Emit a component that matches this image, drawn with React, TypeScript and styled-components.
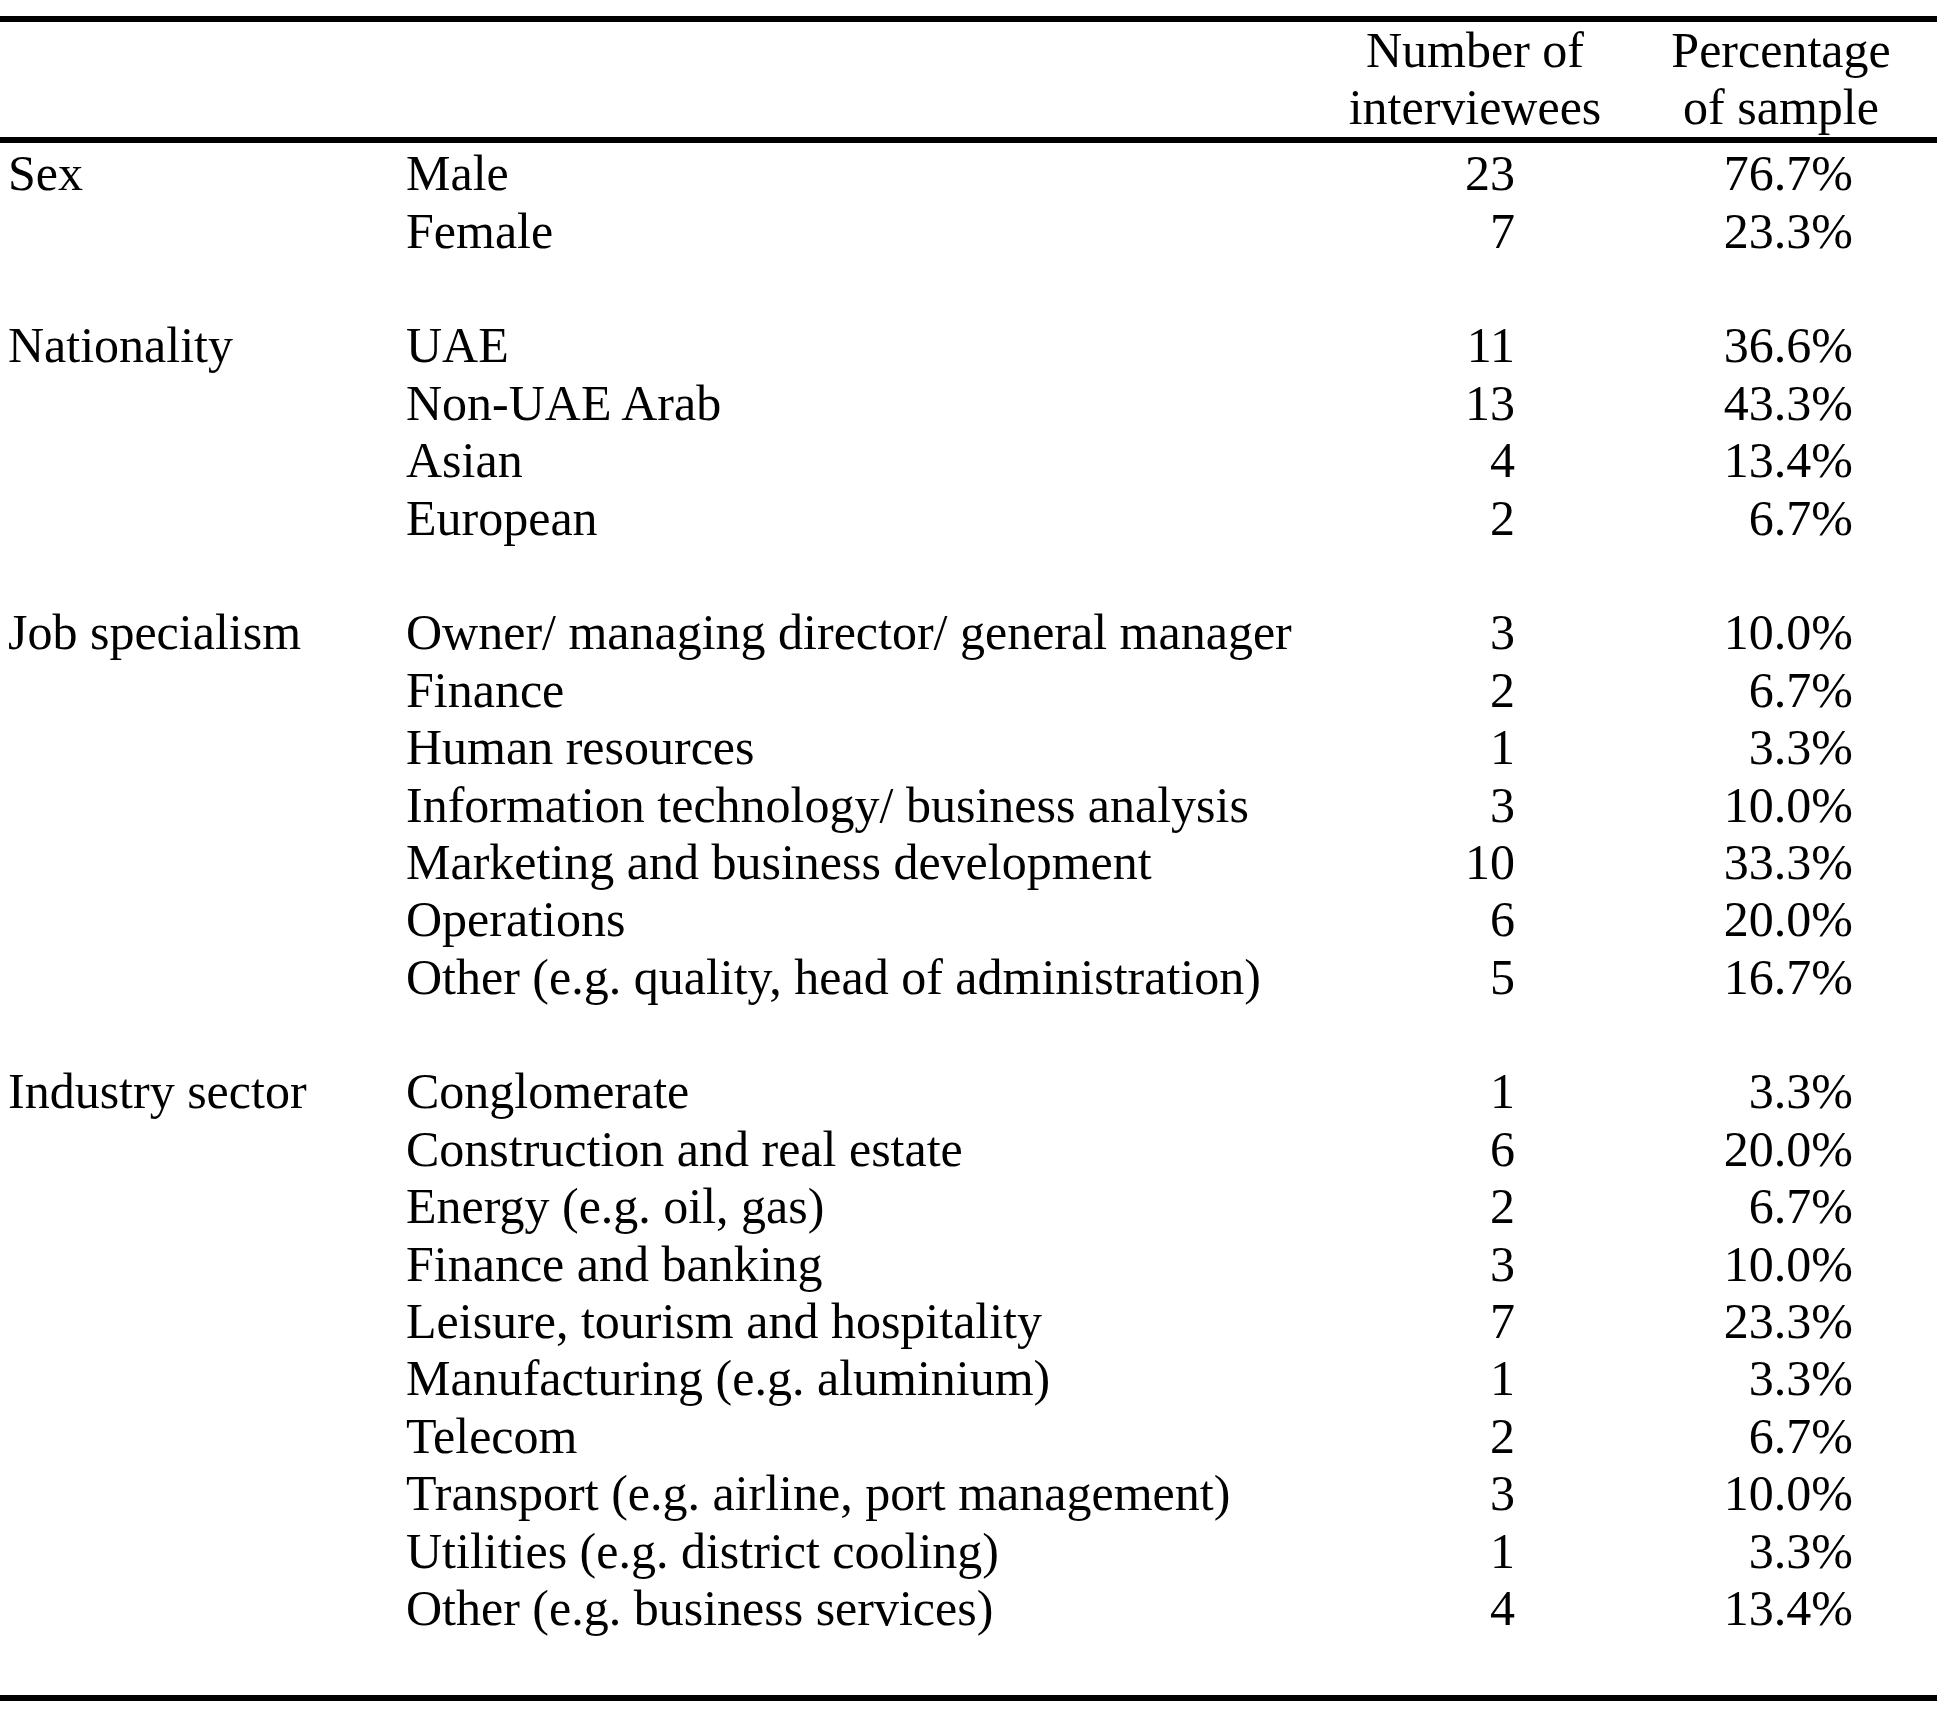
import React from 'react';
import styled, { createGlobalStyle } from 'styled-components';

const GlobalStyle = createGlobalStyle`
  html, body {
    margin: 0;
    padding: 0;
    background: #ffffff;
  }
  body {
    font-family: "Liberation Serif", "Times New Roman", serif;
    color: #000000;
  }
`;

const Page = styled.div`
  padding-top: 16px;
  width: 1937px;
`;

const Table = styled.div`
  border-top: 6px solid #000;
  border-bottom: 6px solid #000;
  font-size: 50px;
  line-height: 57.4px;
`;

const Head = styled.div`
  display: grid;
  grid-template-columns: 406px 919px 300px 1fr;
  border-bottom: 6px solid #000;
`;

const HeadCell = styled.div`
  text-align: center;
  white-space: nowrap;
`;

const Body = styled.div`
  padding: 2.4px 0 58px;
`;

const Group = styled.div<{ $last?: boolean }>`
  margin-bottom: ${(p) => (p.$last ? '0' : '57.4px')};
`;

const Row = styled.div`
  display: grid;
  grid-template-columns: 406px 919px 300px 1fr;
  height: 57.4px;
`;

const Label = styled.div`
  padding-left: 8px;
  white-space: nowrap;
`;

const Item = styled.div`
  white-space: nowrap;
`;

const Num = styled.div<{ $pad: number }>`
  text-align: right;
  padding-right: ${(p) => p.$pad}px;
  white-space: nowrap;
`;

type Entry = [string, number, string];

const groups: { label: string; rows: Entry[] }[] = [
  {
    label: 'Sex',
    rows: [
      ['Male', 23, '76.7%'],
      ['Female', 7, '23.3%'],
    ],
  },
  {
    label: 'Nationality',
    rows: [
      ['UAE', 11, '36.6%'],
      ['Non-UAE Arab', 13, '43.3%'],
      ['Asian', 4, '13.4%'],
      ['European', 2, '6.7%'],
    ],
  },
  {
    label: 'Job specialism',
    rows: [
      ['Owner/ managing director/ general manager', 3, '10.0%'],
      ['Finance', 2, '6.7%'],
      ['Human resources', 1, '3.3%'],
      ['Information technology/ business analysis', 3, '10.0%'],
      ['Marketing and business development', 10, '33.3%'],
      ['Operations', 6, '20.0%'],
      ['Other (e.g. quality, head of administration)', 5, '16.7%'],
    ],
  },
  {
    label: 'Industry sector',
    rows: [
      ['Conglomerate', 1, '3.3%'],
      ['Construction and real estate', 6, '20.0%'],
      ['Energy (e.g. oil, gas)', 2, '6.7%'],
      ['Finance and banking', 3, '10.0%'],
      ['Leisure, tourism and hospitality', 7, '23.3%'],
      ['Manufacturing (e.g. aluminium)', 1, '3.3%'],
      ['Telecom', 2, '6.7%'],
      ['Transport (e.g. airline, port management)', 3, '10.0%'],
      ['Utilities (e.g. district cooling)', 1, '3.3%'],
      ['Other (e.g. business services)', 4, '13.4%'],
    ],
  },
];

export default function App() {
  return (
    <Page>
      <GlobalStyle />
      <Table>
        <Head>
          <div />
          <div />
          <HeadCell>
            Number of
            <br />
            interviewees
          </HeadCell>
          <HeadCell>
            Percentage
            <br />
            of sample
          </HeadCell>
        </Head>
        <Body>
          {groups.map((g, gi) => (
            <Group key={g.label} $last={gi === groups.length - 1}>
              {g.rows.map(([name, n, pct], i) => (
                <Row key={name}>
                  <Label>{i === 0 ? g.label : ''}</Label>
                  <Item>{name}</Item>
                  <Num $pad={110}>{n}</Num>
                  <Num $pad={84}>{pct}</Num>
                </Row>
              ))}
            </Group>
          ))}
        </Body>
      </Table>
    </Page>
  );
}
